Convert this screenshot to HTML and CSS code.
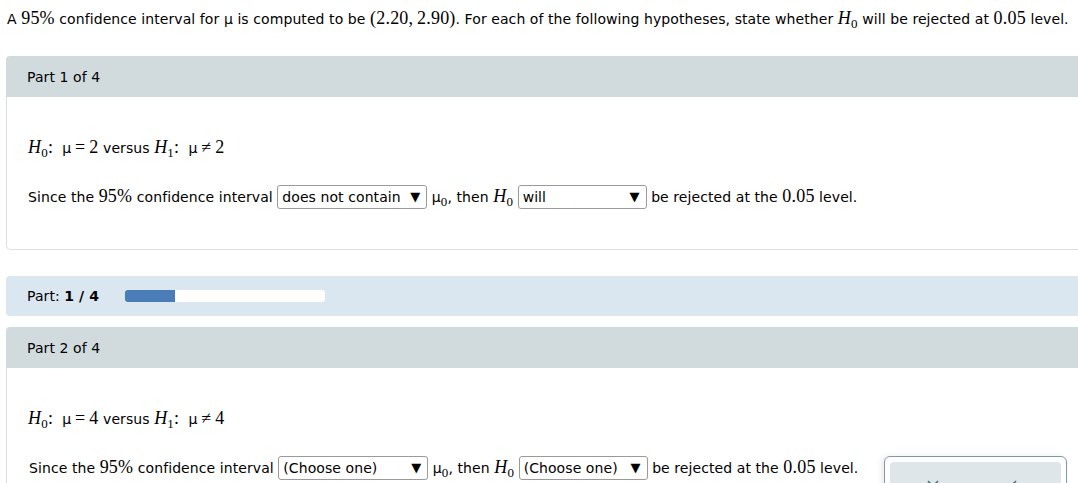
FILE: index.html
```html
<!DOCTYPE html>
<html lang="en">
<head>
    <meta charset="UTF-8">
    <title>Confidence Interval Hypotheses</title>
    <link rel="stylesheet" href="styles.css">
</head>
<body>
    <div class="page">
        <p class="intro">A <span class="m">95%</span> confidence interval for <span class="mu">μ</span> is computed to be <span class="m">(2.20,&thinsp;2.90)</span>. For each of the following hypotheses, state whether <span class="m"><i>H</i><sub>0</sub></span> will be rejected at <span class="m">0.05</span> level.</p>

        <div class="part">
            <div class="part-head">Part 1 of 4</div>
            <div class="part-body">
                <div class="row hyp"><span class="m"><i>H</i><sub>0</sub>:&ensp;</span><span class="mu">μ</span><span class="m">&thinsp;=&thinsp;2</span> versus <span class="m"><i>H</i><sub>1</sub>:&ensp;</span><span class="mu">μ</span><span class="m">&thinsp;≠&thinsp;2</span></div>
                <div class="row">Since the <span class="m">95%</span> confidence interval <span class="select sel-wide">does not contain<span class="arrow">▼</span></span> <span class="mu">μ<sub class="m-sub">0</sub></span>, then <span class="m"><i>H</i><sub>0</sub></span> <span class="select sel-narrow">will<span class="arrow">▼</span></span> be rejected at the <span class="m">0.05</span> level.</div>
            </div>
        </div>

        <div class="progress-band">
            <span>Part: <b>1 / 4</b></span>
            <div class="progress"><div class="progress-fill" style="width: 25%"></div></div>
        </div>

        <div class="part">
            <div class="part-head">Part 2 of 4</div>
            <div class="part-body open">
                <div class="row hyp"><span class="m"><i>H</i><sub>0</sub>:&ensp;</span><span class="mu">μ</span><span class="m">&thinsp;=&thinsp;4</span> versus <span class="m"><i>H</i><sub>1</sub>:&ensp;</span><span class="mu">μ</span><span class="m">&thinsp;≠&thinsp;4</span></div>
                <div class="row shifted">Since the <span class="m">95%</span> confidence interval <span class="select sel-wide">(Choose one)<span class="arrow">▼</span></span> <span class="mu">μ<sub class="m-sub">0</sub></span>, then <span class="m"><i>H</i><sub>0</sub></span> <span class="select sel-narrow">(Choose one)<span class="arrow">▼</span></span> be rejected at the <span class="m">0.05</span> level.</div>
            </div>
        </div>
    </div>

    <div class="tools">
        <div class="tools-inner">
            <svg width="14" height="14" viewBox="0 0 14 14"><path d="M2 2 L12 12 M12 2 L2 12" stroke="#4d6f7a" stroke-width="1.6" fill="none"/></svg>
            <svg width="14" height="14" viewBox="0 0 14 14"><path d="M5 2 L2 5 L5 8 M2 5 H9 A3.5 3.5 0 0 1 9 12 H6" stroke="#4d6f7a" stroke-width="1.6" fill="none"/></svg>
        </div>
    </div>
</body>
</html>
```

FILE: styles.css
```css
body {
    margin: 0;
    font-family: "DejaVu Sans", Verdana, sans-serif;
    font-size: 14px;
    letter-spacing: 0.08px;
    color: #000;
    background: #fff;
    overflow: hidden;
}
.page {
    padding-left: 6px;
}
.intro {
    margin: 0 0 28px 1px;
    padding-top: 9px;
    line-height: 18px;
    white-space: nowrap;
}
.m {
    font-family: "Liberation Serif", "Times New Roman", serif;
    font-size: 18px;
    letter-spacing: 0.2px;
}
.m i {
    font-style: italic;
}
sub {
    font-size: 13px;
    vertical-align: -4px;
    line-height: 0;
}
.m-sub {
    font-family: "Liberation Serif", serif;
}
.mu {
    font-family: "DejaVu Sans", Verdana, sans-serif;
}
.part-head {
    background: #d1dbde;
    height: 41px;
    line-height: 42px;
    padding-left: 21px;
    border-radius: 4px 0 0 0;
}
.part-body {
    border: 1px solid #d9dfe2;
    border-top: none;
    border-right: none;
    border-radius: 0 0 0 5px;
    padding: 36px 21px 39px;
    margin-bottom: 26px;
}
.part-body.open {
    margin-bottom: 0;
    border-bottom: none;
}
.row {
    line-height: 28px;
    height: 28px;
    white-space: nowrap;
}
.row.hyp {
    margin-bottom: 21px;
}
.row.shifted {
    margin-top: 6px;
    padding-left: 1px;
}
.select {
    display: inline-flex;
    justify-content: space-between;
    align-items: center;
    vertical-align: middle;
    box-sizing: border-box;
    height: 24px;
    line-height: 22px;
    border: 1px solid #9a9a9a;
    border-radius: 3px;
    padding: 0 6px 0 4px;
    margin-top: -3px;
    background: #fff;
}
.sel-wide {
    width: 150px;
}
.sel-narrow {
    width: 129px;
}
.arrow {
    font-size: 13px;
}
.progress-band {
    display: flex;
    align-items: center;
    gap: 26px;
    background: #dae6f0;
    height: 40px;
    padding-left: 21px;
    border-radius: 4px 0 0 4px;
    margin-bottom: 11px;
}
.progress {
    width: 200px;
    height: 12px;
    background: #fff;
    border-radius: 3px;
    overflow: hidden;
}
.progress-fill {
    height: 100%;
    background: #4a7db8;
}
.tools {
    position: absolute;
    left: 884px;
    top: 456px;
    width: 183px;
    height: 60px;
    box-sizing: border-box;
    border: 1px solid #7d9aa3;
    border-radius: 6px;
    background: #fff;
    padding: 5px;
    box-shadow: -3px 0 6px rgba(0, 0, 0, 0.08);
}
.tools-inner {
    background: #dfe6e9;
    border-radius: 4px;
    height: 100%;
    display: flex;
    justify-content: space-around;
    align-items: flex-start;
    padding-top: 17px;
    box-sizing: border-box;
}
```
